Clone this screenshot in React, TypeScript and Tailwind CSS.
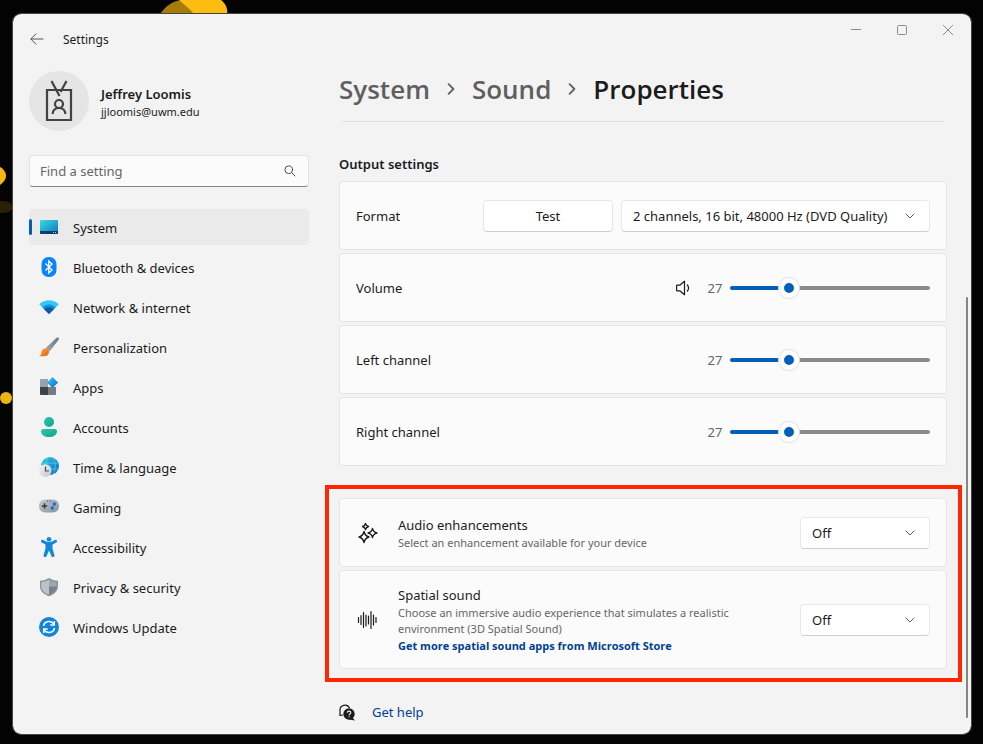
import { useState } from "react";
import type { ReactNode } from "react";

const navItems: { label: string; icon: ReactNode }[] = [
  {
    label: "System",
    icon: (
      <>
        <defs>
          <linearGradient id="sys" x1="0" y1="0" x2="1" y2="1">
            <stop offset="0" stopColor="#3adbe0" />
            <stop offset="1" stopColor="#1272c4" />
          </linearGradient>
        </defs>
        <rect x="1" y="3" width="18" height="14" rx="1" fill="url(#sys)" />
        <path d="M1 14h18v2a1 1 0 0 1-1 1H2a1 1 0 0 1-1-1z" fill="#0c3f6b" />
        <path d="M14 15h1v1h-1zM16 15h1v1h-1z" fill="#8fd6f2" />
      </>
    ),
  },
  {
    label: "Bluetooth & devices",
    icon: (
      <>
        <rect x="2.500" y="0" width="15" height="20" rx="7" fill="#0a84fb" />
        <path d="M6.500 6.500 13 13l-3.200 3V4L13 7l-6.500 6.500" fill="none" stroke="#fff" strokeWidth="1.300" />
      </>
    ),
  },
  {
    label: "Network & internet",
    icon: (
      <>
        <path d="M.2 7.200C5.500 1.900 14.500 1.900 19.800 7.200L10 17z" fill="#35c8f5" />
        <path d="M3.300 10.300C7 6.400 13 6.400 16.700 10.300L10 17z" fill="#1593dc" />
        <path d="M5 12C7.500 9.800 12.500 9.800 15 12l-5 5z" fill="#0c59a4" />
      </>
    ),
  },
  {
    label: "Personalization",
    icon: (
      <>
        <defs>
          <linearGradient id="handle" x1="0" y1="1" x2="1" y2="0">
            <stop offset="0" stopColor="#a2a9af" />
            <stop offset="1" stopColor="#6b747c" />
          </linearGradient>
          <linearGradient id="tip" x1="0" y1="0" x2="1" y2="1">
            <stop offset="0" stopColor="#ffb13d" />
            <stop offset="1" stopColor="#e5590c" />
          </linearGradient>
        </defs>
        <path d="M19.500.8c.7.600.5 1.500 0 2.200L10.500 14.500 6.800 11 17.300 1c.7-.6 1.500-.8 2.200-.2z" fill="url(#handle)" />
        <path d="M6.600 11.200c1.700 0 3.400 1.600 3.400 3.500 0 3.500-4 5.500-9.700 4.300 2.200-1 1.800-2.200 2.200-4.300.4-2.200 2.200-3.500 4.100-3.500z" fill="url(#tip)" />
      </>
    ),
  },
  {
    label: "Apps",
    icon: (
      <>
        <defs>
          <linearGradient id="tile" x1="0" y1="0" x2="1" y2="1">
            <stop offset="0" stopColor="#38c3f4" />
            <stop offset="1" stopColor="#0870d0" />
          </linearGradient>
        </defs>
        <path d="M1 3a1 1 0 0 1 1-1h7v8H1z" fill="#99a2aa" />
        <path d="M1 10h8v8H2a1 1 0 0 1-1-1z" fill="#404346" />
        <path d="M9 10h8v7a1 1 0 0 1-1 1H9z" fill="#747b82" />
        <path d="M13.600.6 18.600 5.600 13.600 10.600 8.600 5.600z" fill="url(#tile)" stroke="url(#tile)" strokeLinejoin="round" />
      </>
    ),
  },
  {
    label: "Accounts",
    icon: (
      <>
        <defs>
          <linearGradient id="acct" x1="0" y1="0" x2="1" y2="1">
            <stop offset="0" stopColor="#2cc9b4" />
            <stop offset="1" stopColor="#13a184" />
          </linearGradient>
        </defs>
        <circle cx="10" cy="5" r="5" fill="url(#acct)" />
        <path d="M2 14.200A2.200 2.200 0 0 1 4.200 12h11.600a2.200 2.200 0 0 1 2.200 2.200C18 18 14.500 20 10 20s-8-2-8-5.800z" fill="url(#acct)" />
      </>
    ),
  },
  {
    label: "Time & language",
    icon: (
      <>
        <defs>
          <linearGradient id="globe" x1="0" y1="0" x2="1" y2="1">
            <stop offset="0" stopColor="#31cfe0" />
            <stop offset="1" stopColor="#0b63c4" />
          </linearGradient>
          <linearGradient id="clock" x1="0" y1="0" x2="1" y2="1">
            <stop offset="0" stopColor="#f7f7f7" />
            <stop offset="1" stopColor="#bfc2c5" />
          </linearGradient>
        </defs>
        <circle cx="11" cy="9" r="9" fill="url(#globe)" />
        <path d="M3 6.200h16M3 12h16M9 .5C6 5 6 13 9 18M14 .5c3 5 3 12 0 17" fill="none" stroke="#6be0f3" strokeWidth=".8" opacity=".7" />
        <circle cx="6.300" cy="13.500" r="6.300" fill="url(#clock)" />
        <path d="M6.500 9.500V14H10" fill="none" stroke="#4a4f54" strokeWidth="1.200" />
      </>
    ),
  },
  {
    label: "Gaming",
    icon: (
      <>
        <defs>
          <linearGradient id="pad" x1="0" y1="0" x2="1" y2="1">
            <stop offset="0" stopColor="#c5cace" />
            <stop offset="1" stopColor="#89929a" />
          </linearGradient>
        </defs>
        <rect x="0" y="2.500" width="20" height="13" rx="6" fill="url(#pad)" />
        <path d="M5.500 6.300v5.400M2.800 9h5.400" stroke="#33383c" strokeWidth="1.400" />
        <circle cx="15.300" cy="7" r="1.700" fill="#0a6fd0" />
        <circle cx="13.300" cy="11" r="1.700" fill="#0a6fd0" />
        <path d="M8 3.500h1.200v1.200H8zM11 3.500h1.200v1.200H11z" fill="#5b6268" />
      </>
    ),
  },
  {
    label: "Accessibility",
    icon: (
      <g fill="#1187dc">
        <circle cx="10" cy="2.300" r="2.300" />
        <path d="M2.400 3.200c.6-.5 1.200-.4 1.800-.1 3.600 2.500 8 2.500 11.600 0 .6-.3 1.200-.4 1.800.1.700.8.500 1.900-.3 2.300L13.500 7.600v4l1.900 6.400c.3 1-.2 1.800-1.100 2-.8.200-1.600-.1-1.900-1L10 13.400 7.600 19c-.3.900-1.100 1.200-1.900 1-.9-.2-1.400-1-1.100-2l1.900-6.400v-4L2.700 5.500c-.8-.4-1-1.500-.3-2.300z" />
      </g>
    ),
  },
  {
    label: "Privacy & security",
    icon: (
      <>
        <path d="M10 1c2.700 1.700 5.500 2.600 9 2.700V9c0 5-3.500 8.300-9 10.300C4.500 17.300 1 14 1 9V3.700C4.500 3.600 7.300 2.700 10 1z" fill="#8b939a" />
        <path d="M10 2.500v15.300c-4.800-1.900-7.700-4.700-7.700-8.800V5C5.500 4.800 7.800 3.900 10 2.500z" fill="#bcc2c9" />
        <path d="M10 2.500v15.300c4.800-1.900 7.700-4.700 7.700-8.800V5c-3.200-.2-5.500-1.100-7.700-2.500z" fill="#7a838b" />
        <path d="M10 2.500C12.200 3.900 14.500 4.800 17.700 5v4.500H10z" fill="#a0a8af" />
      </>
    ),
  },
  {
    label: "Windows Update",
    icon: (
      <>
        <circle cx="10" cy="10" r="10" fill="#1085dc" />
        <path d="M4.500 9A5.600 5.600 0 0 1 15 7.500M15.500 11A5.600 5.600 0 0 1 5 12.500" fill="none" stroke="#fff" strokeWidth="1.500" />
        <path d="M15.300 4v4h-4M4.700 16v-4h4" fill="none" stroke="#fff" strokeWidth="1.500" />
      </>
    ),
  },
];

function Chevron({ className }: { className: string }) {
  return (
    <svg viewBox="0 0 10 10" className={className} fill="none" stroke="currentColor" strokeLinecap="round" strokeLinejoin="round" aria-hidden="true">
      <path d="M1 3l4 4 4-4" />
    </svg>
  );
}

function Dropdown({ label, options, wide }: { label: string; options: string[]; wide?: boolean }) {
  return (
    <div className={`relative shrink-0 ${wide ? "w-[309px]" : "w-[130px]"}`}>
      <select
        aria-label={label}
        className="h-8 w-full appearance-none rounded border border-[#e8e8e8] border-b-[#cfcfcf] bg-white pr-8 pl-[11px] text-[13px] text-[#1b1b1b]"
      >
        {options.map((option) => (
          <option key={option}>{option}</option>
        ))}
      </select>
      <Chevron className="pointer-events-none absolute top-[11px] right-[15px] size-[10px] text-[#5c5c5c]" />
    </div>
  );
}

function Card({ children, className = "h-[69px]" }: { children: ReactNode; className?: string }) {
  return (
    <div className={`flex items-center rounded border border-[#e5e5e5] bg-[#fbfbfb] px-4 ${className}`}>{children}</div>
  );
}

function VolumeRow({ label, speaker }: { label: string; speaker?: boolean }) {
  const [value, setValue] = useState(27);
  const id = label.toLowerCase().replace(" ", "-");
  const fill = `${value}%`;
  return (
    <Card>
      <label htmlFor={id} className="flex-1">
        {label}
      </label>
      {speaker && (
        <button aria-label="Mute" className="mr-4">
          <svg viewBox="0 0 16 16" className="size-4" fill="none" stroke="#1b1b1b" strokeWidth="1.200" strokeLinecap="round" strokeLinejoin="round">
            <path d="M2.200 5.200h2.600L9.500 1.200v13.600l-4.700-4H2.200a.6.600 0 0 1-.6-.6V5.800a.6.600 0 0 1 .6-.6z" />
            <path d="M12.300 5c1.700 1.600 1.700 4.400 0 6" />
          </svg>
        </button>
      )}
      <output htmlFor={id} className="w-4 text-center text-[#666]">
        {value}
      </output>
      <input
        id={id}
        type="range"
        value={value}
        onChange={(event) => setValue(Number(event.target.value))}
        style={{ background: `linear-gradient(to right, #005fb8 ${fill}, #8a8a8a ${fill})` }}
        className="ml-[7px] h-1 w-[200px] appearance-none rounded-full [&::-webkit-slider-thumb]:size-5 [&::-webkit-slider-thumb]:appearance-none [&::-webkit-slider-thumb]:rounded-full [&::-webkit-slider-thumb]:border-[5px] [&::-webkit-slider-thumb]:border-white [&::-webkit-slider-thumb]:bg-[#005fb8] [&::-webkit-slider-thumb]:shadow-[0_0_1px_1px_#e5e5e5]"
      />
    </Card>
  );
}

export default function App() {
  return (
    <div className="relative flex min-h-screen bg-[#030303] pt-[14px] pr-3 pb-[10px] pl-[13px] font-['Noto_Sans','Open_Sans',sans-serif] text-[13px] leading-5 text-[#1b1b1b]">
      <svg className="absolute top-0 left-0 h-[420px] w-60" viewBox="0 0 240 420" aria-hidden="true">
        <path d="M160 14c6-8 12-13 22-14h20l-6 14z" fill="#a77b08" />
        <path d="M179 0h42c5 4 7 9 6 14h-33c-5-6-11-10-15-14z" fill="#fdbd10" />
        <path d="M0 167c4 2 6 6 6 9s-2 6-6 9z" fill="#f7b90f" />
        <ellipse cx="3" cy="207" rx="10" ry="6" fill="#2a2005" />
        <circle cx="6" cy="398" r="6" fill="#edb413" />
      </svg>

      <div className="relative flex flex-1 flex-col rounded-lg bg-[#f3f3f3] outline outline-[#454545]">
        <header className="flex h-12 items-start justify-between pl-4">
          <div className="flex items-center gap-[18px] pt-[14px]">
            <button aria-label="Back">
              <svg viewBox="0 0 16 16" className="size-4" fill="none" stroke="#555" strokeLinecap="round" strokeLinejoin="round">
                <path d="M14 8H2M7 2.800 1.800 8 7 13.200" />
              </svg>
            </button>
            <span className="pt-[2px] text-xs leading-5">Settings</span>
          </div>
          <div className="flex h-8 text-[#8c8c8c]">
            <button aria-label="Minimize" className="flex w-[46px] items-center justify-center">
              <svg viewBox="0 0 12 12" className="size-3" fill="none" stroke="currentColor">
                <path d="M1 5.500h10" />
              </svg>
            </button>
            <button aria-label="Maximize" className="flex w-[46px] items-center justify-center">
              <svg viewBox="0 0 12 12" className="size-3" fill="none" stroke="currentColor">
                <rect x="1.500" y="1.500" width="9" height="9" rx="1" />
              </svg>
            </button>
            <button aria-label="Close" className="flex w-[46px] items-center justify-center">
              <svg viewBox="0 0 12 12" className="size-3" fill="none" stroke="currentColor">
                <path d="M1 1l10 10M11 1 1 11" />
              </svg>
            </button>
          </div>
        </header>

        <div className="flex flex-1 gap-[30px] pt-[9px] pr-6 pl-4">
          <aside className="w-[280px] shrink-0">
            <div className="flex items-center gap-3">
              <div className="flex size-[60px] items-center justify-center rounded-full bg-[#e5e5e5]">
                <svg viewBox="0 0 28 42" className="h-[42px] w-7" fill="none" stroke="#424242" strokeWidth="2.200">
                  <path d="M12 10H2v30h24V10H16" />
                  <path d="M6.500 1 14.500 16M21.500 1 15.500 12M12 10h5" />
                  <circle cx="14" cy="24" r="4" />
                  <path d="M7.500 34c.5-4 3-6 6.500-6s6 2 6.500 6" />
                </svg>
              </div>
              <div className="pt-1">
                <p className="font-semibold leading-[18px]">Jeffrey Loomis</p>
                <p className="text-[11px] leading-[18px]">jjloomis@uwm.edu</p>
              </div>
            </div>

            <div className="mt-6 flex h-8 items-center rounded border border-[#e2e2e2] border-b-[#858585] bg-[#fbfbfb] pr-3 pl-[10px]">
              <input
                type="search"
                aria-label="Find a setting"
                placeholder="Find a setting"
                className="min-w-0 flex-1 bg-transparent outline-none placeholder:text-[#666]"
              />
              <svg viewBox="0 0 12 12" className="size-3" fill="none" stroke="#4d4d4d" strokeLinecap="round" aria-hidden="true">
                <circle cx="4.700" cy="4.700" r="3.800" />
                <path d="M7.500 7.500 11 11" />
              </svg>
            </div>

            <nav className="mt-[22px] flex flex-col gap-1">
              {navItems.map((item, index) => (
                <a
                  key={item.label}
                  href="#"
                  aria-current={index === 0 ? "page" : undefined}
                  className={`relative flex h-9 items-center gap-[14px] rounded pl-[10px] ${index === 0 ? "bg-[#eaeaea]" : ""}`}
                >
                  {index === 0 && <span className="absolute left-0 h-4 w-[3px] rounded-full bg-[#005fb8]" />}
                  <svg viewBox="0 0 20 20" className="size-5" aria-hidden="true">
                    {item.icon}
                  </svg>
                  <span className="pt-[2px]">{item.label}</span>
                </a>
              ))}
            </nav>
          </aside>

          <main className="min-w-0 flex-1">
            <nav aria-label="Breadcrumb" className="flex h-9 items-center gap-[15px] font-['Open_Sans','Noto_Sans',sans-serif] text-[26px] font-semibold text-[#5f5f5f]">
              <a href="#">System</a>
              <Chevron className="size-3 -rotate-90 stroke-[1.500]" />
              <a href="#">Sound</a>
              <Chevron className="size-3 -rotate-90 stroke-[1.500]" />
              <h1 className="text-[#1b1b1b]">Properties</h1>
            </nav>
            <hr className="mx-[3px] mt-[14px] border-[#e0e0e0]" />

            <h2 className="mt-8 font-semibold">Output settings</h2>
            <section className="mt-[7px] flex flex-col gap-[3px]">
              <Card>
                <span className="flex-1">Format</span>
                <button className="mr-2 h-8 w-[130px] rounded border border-[#e8e8e8] border-b-[#cfcfcf] bg-white">Test</button>
                <Dropdown wide label="Format" options={["2 channels, 16 bit, 48000 Hz (DVD Quality)"]} />
              </Card>
              <VolumeRow label="Volume" speaker />
              <VolumeRow label="Left channel" />
              <VolumeRow label="Right channel" />
            </section>

            <section className="mt-[19px] -mr-[15px] -ml-[14px] flex flex-col gap-[3px] border-4 border-[#ff2600] pt-[9px] pr-[11px] pb-[9px] pl-[10px]">
              <Card>
                <svg viewBox="0 0 24 24" className="mr-[18px] size-6 shrink-0" fill="none" stroke="#1b1b1b" strokeWidth="1.300" strokeLinejoin="round" aria-hidden="true">
                  <path d="M9.500 2.500Q10.100 4.900 12.500 5.500 10.100 6.100 9.500 8.500 8.900 6.100 6.500 5.500 8.900 4.900 9.500 2.500z" />
                  <path d="M16.500 7.500Q17.300 11.200 21 12 17.300 12.800 16.500 16.500 15.700 12.800 12 12 15.700 11.200 16.500 7.500z" />
                  <path d="M8 10.500Q9 15 13 16 9 17 8 21.500 7 17 3 16 7 15 8 10.500z" />
                </svg>
                <div className="flex-1">
                  <h3>Audio enhancements</h3>
                  <p className="text-[11px] leading-4 text-[#666]">Select an enhancement available for your device</p>
                </div>
                <Dropdown label="Audio enhancements" options={["Off"]} />
              </Card>
              <Card className="h-[99px]">
                <svg viewBox="0 0 24 24" className="mr-[18px] size-6 shrink-0" fill="none" stroke="#1b1b1b" strokeWidth="1.200" strokeLinecap="round" aria-hidden="true">
                  <path d="M2.500 9.500v5M5 7.500v9M7.500 4.500v15M10 7v11M12.500 8v8M15 3.500v17M17.500 7v10M20 9.500v5" />
                </svg>
                <div className="min-w-0 flex-1 pr-10">
                  <h3>Spatial sound</h3>
                  <p className="text-[11px] leading-4 text-[#666]">
                    Choose an immersive audio experience that simulates a realistic environment (3D Spatial Sound)
                  </p>
                  <a href="#" className="block font-['Open_Sans','Noto_Sans',sans-serif] text-[11px] font-bold leading-[18px] text-[#003e92]">
                    Get more spatial sound apps from Microsoft Store
                  </a>
                </div>
                <Dropdown label="Spatial sound" options={["Off"]} />
              </Card>
            </section>

            <a href="#" className="mt-5 flex w-fit items-center gap-4 text-[#003e92]">
              <svg viewBox="0 0 17 17" className="size-[17px]" aria-hidden="true">
                <path d="M1 12V6.500A5 5 0 0 1 10.500 4M1 11.500l3-.5" fill="none" stroke="#1b1b1b" strokeWidth="1.200" />
                <circle cx="10" cy="10" r="5.700" fill="#1b1b1b" />
                <path d="M13 13l3 3.500-6-1z" fill="#1b1b1b" />
                <path d="M8.300 8.800c0-2.200 3.500-2.200 3.500 0 0 1.200-1.700 1.200-1.700 2.500M10.100 12.300v1" fill="none" stroke="#f3f3f3" strokeWidth="1.100" />
              </svg>
              <span>Get help</span>
            </a>
          </main>
        </div>
        <div className="absolute right-[3px] bottom-4 h-[421px] w-[2px] rounded-full bg-[#858585]" />
      </div>
    </div>
  );
}
